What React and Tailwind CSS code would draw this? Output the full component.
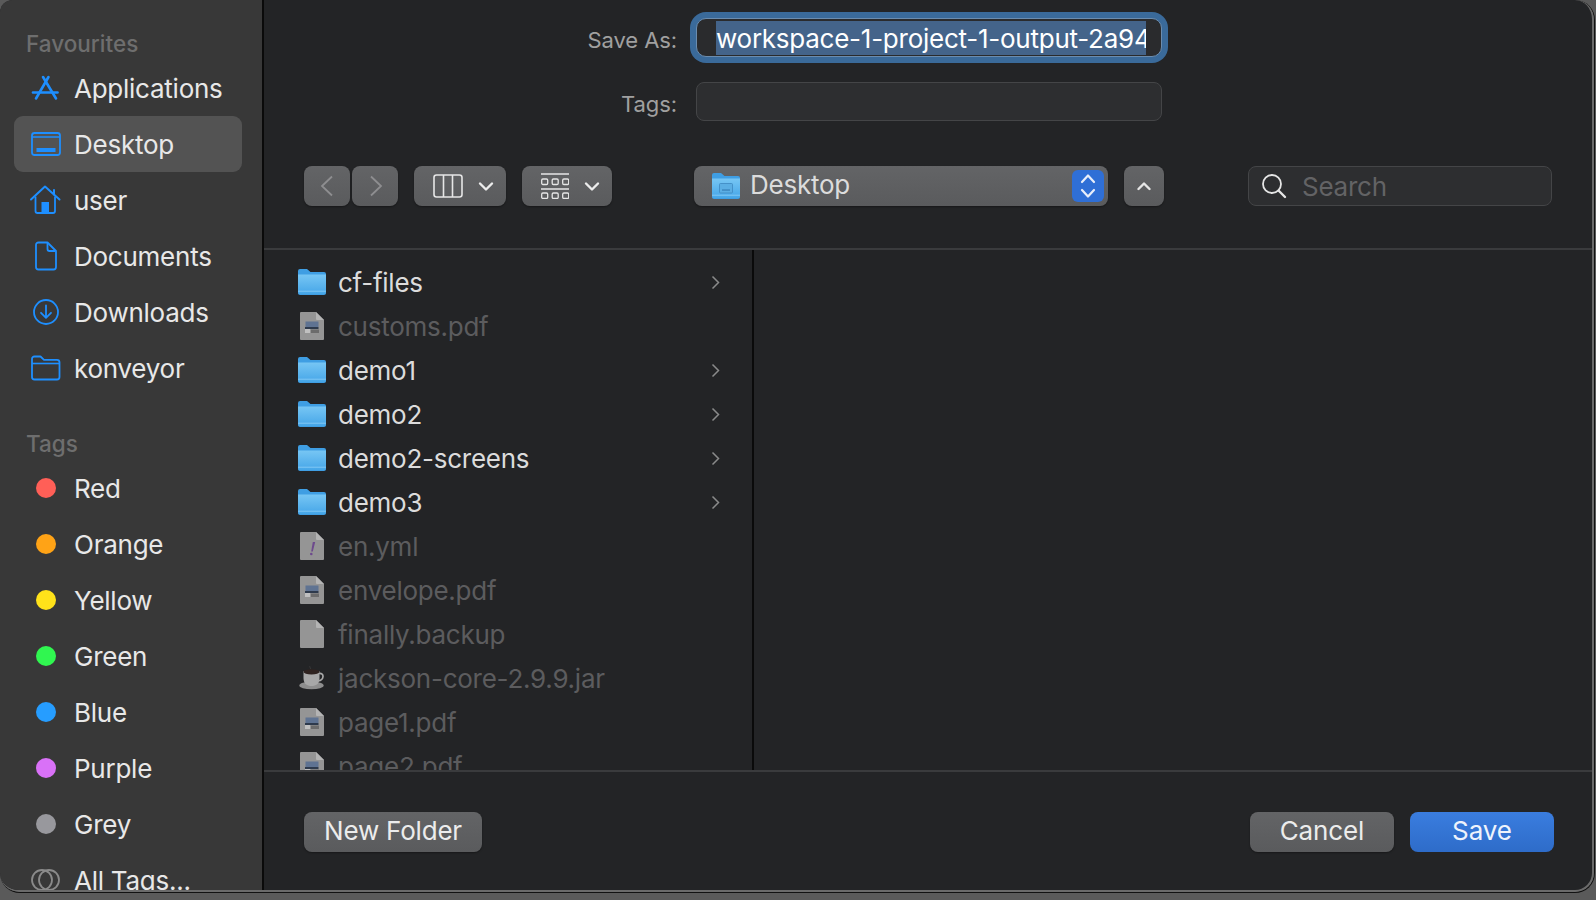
const BLUE = "#1e8fff";

function SvgBase({ children, w = 32, h = 32, box, className = "" }) {
  return (
    <svg width={w} height={h} viewBox={box || `0 0 ${w} ${h}`} fill="none" className={`block shrink-0 ${className}`}>
      {children}
    </svg>
  );
}

const AppsIcon = () => (
  <SvgBase>
    <g stroke={BLUE} strokeWidth="2.6" strokeLinecap="round">
      <path d="M14 5 L27 26.5" />
      <path d="M19.5 5 L7 26.5" />
      <path d="M4 20.5 H28.5" />
    </g>
  </SvgBase>
);
const DesktopIcon = () => (
  <SvgBase>
    <rect x="3" y="5" width="28" height="22" rx="2.5" stroke={BLUE} strokeWidth="1.8" />
    <path d="M3 9 H31" stroke={BLUE} strokeWidth="1.4" />
    <rect x="7.5" y="20" width="19" height="4" fill={BLUE} />
  </SvgBase>
);
const HomeIcon = () => (
  <SvgBase>
    <path d="M2 15.5 L16 2.5 L30.5 15.5" stroke={BLUE} strokeWidth="2" strokeLinecap="round" strokeLinejoin="round" />
    <path d="M25 6 V10.5" stroke={BLUE} strokeWidth="2" strokeLinecap="round" />
    <path d="M6.5 12.5 V27 A2 2 0 0 0 8.5 29 H24 A2 2 0 0 0 26 27 V12.5" stroke={BLUE} strokeWidth="1.8" />
    <rect x="12.5" y="18" width="7.5" height="11" fill={BLUE} />
  </SvgBase>
);
const DocIcon = () => (
  <SvgBase>
    <path d="M9.5 2.5 H18.5 L27 11 V27 A2.5 2.5 0 0 1 24.5 29.5 H9.5 A2.5 2.5 0 0 1 7 27 V5 A2.5 2.5 0 0 1 9.5 2.5 Z" stroke={BLUE} strokeWidth="1.8" strokeLinejoin="round" />
    <path d="M18.5 3 V9 A2 2 0 0 0 20.5 11 H26.5" stroke={BLUE} strokeWidth="1.8" />
  </SvgBase>
);
const DownloadIcon = () => (
  <SvgBase>
    <circle cx="17" cy="16" r="12" stroke={BLUE} strokeWidth="1.8" />
    <path d="M17 9.5 V21.5 M12 16.8 L17 21.8 L22 16.8" stroke={BLUE} strokeWidth="1.8" strokeLinecap="round" strokeLinejoin="round" />
  </SvgBase>
);
const FolderLine = () => (
  <SvgBase>
    <path d="M3 7 A2.5 2.5 0 0 1 5.5 4.5 H11.5 L15 7.8 H28 A2.5 2.5 0 0 1 30.5 10.3 V25 A2.5 2.5 0 0 1 28 27.5 H5.5 A2.5 2.5 0 0 1 3 25 Z" stroke={BLUE} strokeWidth="1.8" strokeLinejoin="round" />
    <path d="M3 11.5 H30" stroke={BLUE} strokeWidth="1.6" />
  </SvgBase>
);
const TagsIcon = () => (
  <SvgBase>
    <circle cx="13" cy="16" r="10" stroke="#8a8a8a" strokeWidth="1.8" />
    <circle cx="20" cy="16" r="10" stroke="#8a8a8a" strokeWidth="1.8" />
  </SvgBase>
);

const FolderFile = ({ inner }) => (
  <svg width="28" height="26" viewBox="0 0 28 26" className="block shrink-0">
    <defs>
      <linearGradient id="folderGrad" x1="0" y1="0" x2="0" y2="1">
        <stop offset="0" stopColor="#77c6f4" />
        <stop offset="1" stopColor="#46a6e8" />
      </linearGradient>
    </defs>
    <path d="M0 2 A2 2 0 0 1 2 0 H9 L12.5 3 H26 A2 2 0 0 1 28 5 V24 A2 2 0 0 1 26 26 H2 A2 2 0 0 1 0 24 Z" fill="#3f9ee3" />
    <path d="M0 5.5 H28 V23.5 A2 2 0 0 1 26 25 H2 A2 2 0 0 1 0 23.5 Z" fill="url(#folderGrad)" />
    <path d="M0 22.2 H28" stroke="#8ed0f7" strokeWidth="0.8" />
    {inner && (
      <g>
        <rect x="7.5" y="10.5" width="13" height="9.5" rx="1" fill="#5baee4" stroke="#3d88c0" strokeWidth="0.8" />
        <rect x="10" y="16.3" width="8" height="1.5" fill="#3d88c0" />
      </g>
    )}
  </svg>
);

const PaperShape = ({ children }) => (
  <svg width="24" height="28" viewBox="0 0 24 28" className="block shrink-0">
    <path d="M1 0 H16 L24 8 V27 A1 1 0 0 1 23 28 H1 A1 1 0 0 1 0 27 V1 A1 1 0 0 1 1 0 Z" fill="#959595" />
    <path d="M16 0 L24 8 H17 A1 1 0 0 1 16 7 Z" fill="#b4b4b4" />
    {children}
  </svg>
);
const PdfIcon = () => (
  <PaperShape>
    <rect x="5.5" y="9.5" width="13" height="5.5" fill="#5f7392" />
    <rect x="5" y="15" width="13.5" height="2" fill="#2e3a4c" />
    <rect x="5" y="17" width="5" height="4" fill="#c0c0c0" />
    <rect x="11" y="17.5" width="8" height="3.5" fill="#6c6c6c" />
  </PaperShape>
);
const YmlIcon = () => (
  <PaperShape>
    <path d="M12.8 10 L15.2 10 L12.8 19.5 L11.2 19.5 Z" fill="#6d4a8d" />
    <circle cx="11.3" cy="22" r="1.3" fill="#6d4a8d" />
  </PaperShape>
);
const PlainIcon = () => <PaperShape />;
const JarIcon = () => (
  <svg width="26" height="24" viewBox="0 0 26 24" className="block shrink-0">
    <ellipse cx="12.5" cy="19.5" rx="12.2" ry="3.8" fill="#8e8e8e" />
    <path d="M4.5 5 H20.5 V12 C20.5 18 17 20 12.5 20 C8 20 4.5 18 4.5 12 Z" fill="#a8a8a8" />
    <path d="M20 7.5 C25.5 6.5 25.5 14 19 15" stroke="#a8a8a8" strokeWidth="1.7" fill="none" />
    <ellipse cx="12.5" cy="5.8" rx="8" ry="2.6" fill="#2f2320" />
    <path d="M11 0 C10 1 12 2 11.5 3" stroke="#3a3a3a" strokeWidth="1" fill="none" />
  </svg>
);

const favourites = [
  ["Applications", AppsIcon],
  ["Desktop", DesktopIcon, true],
  ["user", HomeIcon],
  ["Documents", DocIcon],
  ["Downloads", DownloadIcon],
  ["konveyor", FolderLine],
];

const tags = [
  ["Red", "bg-[#ff5f57]"],
  ["Orange", "bg-[#ffa316]"],
  ["Yellow", "bg-[#ffe21a]"],
  ["Green", "bg-[#30f650]"],
  ["Blue", "bg-[#269dff]"],
  ["Purple", "bg-[#d971f7]"],
  ["Grey", "bg-[#98989d]"],
];

const files = [
  ["cf-files", "folder"],
  ["customs.pdf", "pdf"],
  ["demo1", "folder"],
  ["demo2", "folder"],
  ["demo2-screens", "folder"],
  ["demo3", "folder"],
  ["en.yml", "yml"],
  ["envelope.pdf", "pdf"],
  ["finally.backup", "plain"],
  ["jackson-core-2.9.9.jar", "jar"],
  ["page1.pdf", "pdf"],
  ["page2.pdf", "pdf"],
];

function SideRow({ label, icon, selected }) {
  return (
    <div className={`ml-[14px] mr-[20px] h-[56px] flex items-center rounded-[9px] ${selected ? "bg-[#535353]" : ""}`}>
      <div className="w-[60px] pl-[15px] shrink-0">{icon}</div>
      <span className="text-[26px] tracking-[-0.25px] text-[#e8e8e8]">{label}</span>
    </div>
  );
}

function FileRow({ name, type }) {
  const isFolder = type === "folder";
  return (
    <div className="h-[44px] flex items-center shrink-0 pl-[34px] pr-[32px]">
      <div className="w-[28px] flex justify-center shrink-0">
        {isFolder && <FolderFile />}
        {type === "pdf" && <PdfIcon />}
        {type === "yml" && <YmlIcon />}
        {type === "plain" && <PlainIcon />}
        {type === "jar" && <JarIcon />}
      </div>
      <span className={`ml-[12px] text-[26px] tracking-[-0.25px] ${isFolder ? "text-[#dcdcdc]" : "text-[#5c5c5e]"}`}>{name}</span>
      {isFolder && (
        <svg width="9" height="15" viewBox="0 0 9 15" className="ml-auto">
          <path d="M1.5 1.5 L7.5 7.5 L1.5 13.5" stroke="#8a8a8a" strokeWidth="1.5" fill="none" />
        </svg>
      )}
    </div>
  );
}

const btn = "h-[40px] rounded-[8px] bg-gradient-to-b from-[#636466] to-[#5a5b5d] shadow-[0_1px_2px_rgba(0,0,0,0.35)] flex items-center shrink-0";
const Chevron = () => (
  <svg width="16" height="11" viewBox="0 0 16 11">
    <path d="M2 2.5 L8 8.5 L14 2.5" stroke="#ececec" strokeWidth="2.4" fill="none" strokeLinecap="round" strokeLinejoin="round" />
  </svg>
);

export default function App() {
  return (
    <div className="w-[1596px] h-[900px] bg-[#5a5a5a] overflow-hidden" style={{ fontFamily: "Inter, 'Noto Sans', sans-serif" }}>
      <div className="w-[1595px] h-[893px] border-b border-r border-[#111111] rounded-b-[20px] rounded-tr-[20px] rounded-tl-[12px] overflow-hidden">
        <div className="w-full h-full flex overflow-hidden rounded-b-[19px] rounded-tr-[19px] rounded-tl-[12px] bg-[#232426] border-b-2 border-r-2 border-[#6a6a6a]">
          {/* sidebar */}
          <aside className="w-[264px] shrink-0 bg-[#383838] border-r-2 border-[#0a0a0a] overflow-hidden">
            <div className="pt-[30px] pl-[26px] h-[58px] text-[22.5px] leading-[28px] font-medium text-[#6e6e6e]">Favourites</div>
            <div className="mt-[2px]">
              {favourites.map(([label, Icon, sel]) => (
                <SideRow key={label} label={label} icon={<Icon />} selected={sel} />
              ))}
            </div>
            <div className="mt-[34px] pl-[26px] h-[28px] text-[22.5px] leading-[28px] font-medium text-[#6e6e6e]">Tags</div>
            <div className="mt-[2px]">
              {tags.map(([label, color]) => (
                <SideRow
                  key={label}
                  label={label}
                  icon={<div className={`w-[20px] h-[20px] rounded-full ml-[7px] ${color}`} />}
                />
              ))}
              <SideRow label="All Tags..." icon={<TagsIcon />} />
            </div>
          </aside>

          {/* main */}
          <main className="flex-1 min-w-0 flex flex-col">
            <div className="h-[248px] shrink-0">
              <div className="flex items-center pt-[12px]">
                <div className="w-[413px] pt-[6px] text-right text-[22px] tracking-[-0.1px] text-[#a0a0a0] shrink-0">Save As:</div>
                <div className="ml-[13px] w-[478px] h-[51px] rounded-[16px] bg-[#3a6a9a] p-[6px] shrink-0">
                  <div className="w-full h-full rounded-[10px] bg-[#2a2b2d] border border-[#6b8cae] pl-[19px] pr-[15px] flex items-center">
                    <div className="w-full h-[34px] bg-[#44648a] overflow-hidden whitespace-nowrap text-[26px] tracking-[-0.25px] leading-[36px] text-white">
                      workspace-1-project-1-output-2a94
                    </div>
                  </div>
                </div>
              </div>
              <div className="flex items-center mt-[19px]">
                <div className="w-[413px] pt-[5px] text-right text-[22px] tracking-[-0.1px] text-[#a0a0a0] shrink-0">Tags:</div>
                <div className="ml-[19px] w-[466px] h-[39px] rounded-[8px] bg-[#2d2e30] border border-[#444547] shrink-0" />
              </div>
              <div className="flex items-center mt-[45px] pl-[40px]">
                <div className={`${btn} w-[46px] justify-center`}>
                  <svg width="14" height="22" viewBox="0 0 14 22"><path d="M12 1.5 L2 11 L12 20.5" stroke="#8e8e90" strokeWidth="1.8" fill="none" /></svg>
                </div>
                <div className={`${btn} w-[46px] justify-center ml-[2px]`}>
                  <svg width="14" height="22" viewBox="0 0 14 22" className="translate-x-[1px]"><path d="M2 1.5 L12 11 L2 20.5" stroke="#8e8e90" strokeWidth="1.8" fill="none" /></svg>
                </div>
                <div className={`${btn} w-[92px] ml-[16px] pl-[19px]`}>
                  <svg width="30" height="24" viewBox="0 0 30 24">
                    <rect x="1" y="1" width="28" height="22" rx="2.5" stroke="#e6e6e6" strokeWidth="1.6" fill="none" />
                    <path d="M10.5 1 V23 M19.5 1 V23" stroke="#e6e6e6" strokeWidth="1.6" />
                  </svg>
                  <div className="ml-[15px]"><Chevron /></div>
                </div>
                <div className={`${btn} w-[90px] ml-[16px] pl-[19px]`}>
                  <svg width="28" height="26" viewBox="0 0 28 26">
                    <path d="M0 1 H28 M0 16 H28" stroke="#e6e6e6" strokeWidth="1.5" />
                    {[0, 10.5, 21].map((x) => (
                      <g key={x}>
                        <rect x={x + 0.7} y="6" width="6" height="5.5" rx="1.2" stroke="#e6e6e6" strokeWidth="1.3" fill="none" />
                        <rect x={x + 0.7} y="20" width="6" height="5.5" rx="1.2" stroke="#e6e6e6" strokeWidth="1.3" fill="none" />
                      </g>
                    ))}
                  </svg>
                  <div className="ml-[15px]"><Chevron /></div>
                </div>
                <div className={`${btn} w-[414px] ml-[82px] pl-[18px] pr-[4px]`}>
                  <FolderFile inner />
                  <span className="ml-[10px] pb-[4px] text-[26px] tracking-[-0.25px] text-[#dcdcdc]">Desktop</span>
                  <div className="ml-auto w-[32px] h-[32px] rounded-[6px] bg-[#2f6fd6] flex items-center justify-center">
                    <svg width="16" height="28" viewBox="0 0 16 28">
                      <path d="M2 10 L8 3.5 L14 10 M2 18 L8 24.5 L14 18" stroke="#e8eefa" strokeWidth="2.2" fill="none" strokeLinecap="round" strokeLinejoin="round" />
                    </svg>
                  </div>
                </div>
                <div className={`${btn} w-[40px] ml-[16px] justify-center`}>
                  <svg width="14" height="10" viewBox="0 0 14 10">
                    <path d="M1.5 8 L7 2.5 L12.5 8" stroke="#e6e6e6" strokeWidth="2.4" fill="none" strokeLinecap="round" strokeLinejoin="round" />
                  </svg>
                </div>
                <div className="ml-[84px] w-[304px] h-[40px] rounded-[8px] bg-[#2d2e30] border border-[#444547] flex items-center pl-[12px] shrink-0">
                  <svg width="26" height="26" viewBox="0 0 26 26">
                    <circle cx="11" cy="11" r="9" stroke="#e6e6e6" strokeWidth="1.8" fill="none" />
                    <path d="M17.5 17.5 L24 24" stroke="#e6e6e6" strokeWidth="2.4" strokeLinecap="round" />
                  </svg>
                  <span className="ml-[15px] text-[26px] tracking-[-0.25px] text-[#636365]">Search</span>
                </div>
              </div>
            </div>

            <div className="h-[2px] bg-[#3a3b3d] shrink-0" />

            <div className="h-[520px] shrink-0 flex">
              <div className="w-[490px] shrink-0 border-r-2 border-[#0a0a0a] overflow-hidden pt-[10px] flex flex-col">
                {files.map(([n, t]) => (
                  <FileRow key={n} name={n} type={t} />
                ))}
              </div>
              <div className="flex-1" />
            </div>

            <div className="h-[2px] bg-[#3a3b3d] shrink-0" />

            <div className="flex-1 flex items-start pt-[40px] pl-[40px] pr-[38px]">
              <div className={`${btn} w-[178px] justify-center pb-[4px] text-[26px] tracking-[-0.2px] text-[#ececec]`}>New Folder</div>
              <div className={`${btn} w-[144px] justify-center pb-[4px] text-[26px] tracking-[-0.1px] text-[#ececec] ml-auto`}>Cancel</div>
              <div className="h-[40px] w-[144px] ml-[16px] pb-[4px] rounded-[8px] bg-gradient-to-b from-[#3a7ddf] to-[#2e6cc9] flex items-center justify-center text-[26px] tracking-[-0.1px] text-[#eef3fc] shrink-0">Save</div>
            </div>
          </main>
        </div>
      </div>
    </div>
  );
}
